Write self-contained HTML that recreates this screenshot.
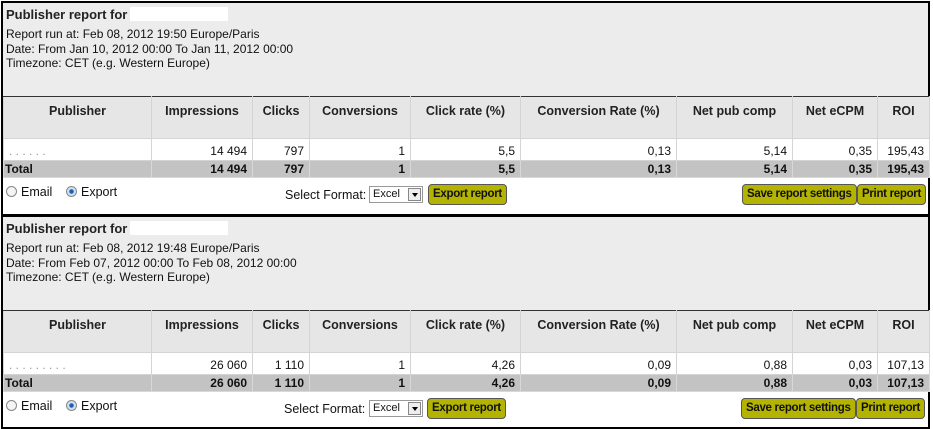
<!DOCTYPE html>
<html><head><meta charset="utf-8"><style>
*{margin:0;padding:0;box-sizing:border-box}
body{width:933px;height:428px;background:#fff;font-family:"Liberation Sans",Arial,sans-serif;font-size:12px;color:#111;position:relative;overflow:hidden}
.sec{position:absolute;left:1px;width:929px;border:2px solid #000;background:#fff}
.hd{position:absolute;left:0;top:0;width:100%;height:93px;background:#ececec;padding:4px 3px}
.hd b{font-size:13px;display:block;margin-bottom:5px;color:#222}
.hd .mask{display:inline-block;width:98px;height:14px;background:#fff;vertical-align:-2px;margin-left:3px}
.hd div{line-height:14.5px}
table{position:absolute;left:0;border-collapse:collapse;width:926px;table-layout:fixed}
td,th{border:1px solid #d4d4d4;padding:0 5px;white-space:nowrap;overflow:hidden}
th{background:#e6e6e6;height:42px;vertical-align:top;padding-top:7px;font-size:12.5px;color:#222;border-top:1px solid #333}
tr.d td{height:22px;text-align:right;background:#fff;padding-top:3px}
tr.t td{height:17px;text-align:right;background:#c3c3c3;font-weight:bold;border-color:#d8d8d8}
.ctl{position:absolute;left:0;width:100%;height:33px}
.rad{position:absolute;top:6px;font-size:12.5px}
.rad i{display:inline-block;width:11px;height:11px;border-radius:50%;border:1px solid #888;background:#f4f4f4;vertical-align:-1px;margin-right:4px}
.rad i.on{background:radial-gradient(circle,#1d5fb0 30%,#cfe0f0 40%)}
.btn{position:absolute;top:5px;height:21px;background:#b3b300;border:1px solid #555;border-radius:4px;font-weight:bold;font-size:11.5px;padding:3px 4px;color:#111;letter-spacing:-0.3px}
.sel{position:absolute;top:7px;left:366px;width:54px;height:17px;border:1px solid #999;font-size:11px;padding:1px 3px;background:#fff}
.sel span{position:absolute;right:1px;top:1px;width:13px;height:13px;border:1px solid #888;background:#eee}
.sel span:after{content:"";position:absolute;left:3px;top:4px;border:3px solid transparent;border-top:4px solid #000}
</style></head><body>

<div class="sec" style="top:1px;height:216px;border-bottom-width:3px">
 <div class="hd"><b>Publisher report for<span class="mask"></span></b>
 <div>Report run at: Feb 08, 2012 19:50 Europe/Paris</div>
 <div>Date: From Jan 10, 2012 00:00 To Jan 11, 2012 00:00</div>
 <div>Timezone: CET (e.g. Western Europe)</div></div>
 <table style="top:93px">
 <colgroup><col style="width:148px"><col style="width:101px"><col style="width:57px"><col style="width:101px"><col style="width:110px"><col style="width:156px"><col style="width:116px"><col style="width:85px"><col style="width:52px"></colgroup>
 <tr><th>Publisher</th><th>Impressions</th><th>Clicks</th><th>Conversions</th><th>Click rate (%)</th><th>Conversion Rate (%)</th><th>Net pub comp</th><th>Net eCPM</th><th>ROI</th></tr>
 <tr class="d"><td style="text-align:left;color:#999">. . . . . .</td><td>14 494</td><td>797</td><td>1</td><td>5,5</td><td>0,13</td><td>5,14</td><td>0,35</td><td>195,43</td></tr>
 <tr class="t"><td style="text-align:left;padding-left:1px">Total</td><td>14 494</td><td>797</td><td>1</td><td>5,5</td><td>0,13</td><td>5,14</td><td>0,35</td><td>195,43</td></tr>
 </table>
 <div class="ctl" style="top:176px">
  <div class="rad" style="left:3px"><i></i>Email</div>
  <div class="rad" style="left:63px"><i class="on"></i>Export</div>
  <div class="rad" style="left:282px;top:9px">Select Format:</div>
  <div class="sel">Excel<span></span></div>
  <div class="btn" style="left:425px">Export report</div>
  <div class="btn" style="left:739px">Save report settings</div>
  <div class="btn" style="left:854px">Print report</div>
 </div>
</div>

<div class="sec" style="top:217px;height:212px;border-top-width:0">
 <div class="hd"><b>Publisher report for<span class="mask"></span></b>
 <div>Report run at: Feb 08, 2012 19:48 Europe/Paris</div>
 <div>Date: From Feb 07, 2012 00:00 To Feb 08, 2012 00:00</div>
 <div>Timezone: CET (e.g. Western Europe)</div></div>
 <table style="top:93px">
 <colgroup><col style="width:148px"><col style="width:101px"><col style="width:57px"><col style="width:101px"><col style="width:110px"><col style="width:156px"><col style="width:116px"><col style="width:85px"><col style="width:52px"></colgroup>
 <tr><th>Publisher</th><th>Impressions</th><th>Clicks</th><th>Conversions</th><th>Click rate (%)</th><th>Conversion Rate (%)</th><th>Net pub comp</th><th>Net eCPM</th><th>ROI</th></tr>
 <tr class="d"><td style="text-align:left;color:#999">. . . . . . . . .</td><td>26 060</td><td>1 110</td><td>1</td><td>4,26</td><td>0,09</td><td>0,88</td><td>0,03</td><td>107,13</td></tr>
 <tr class="t"><td style="text-align:left;padding-left:1px">Total</td><td>26 060</td><td>1 110</td><td>1</td><td>4,26</td><td>0,09</td><td>0,88</td><td>0,03</td><td>107,13</td></tr>
 </table>
 <div class="ctl" style="top:176px">
  <div class="rad" style="left:3px"><i></i>Email</div>
  <div class="rad" style="left:63px"><i class="on"></i>Export</div>
  <div class="rad" style="left:281px;top:9px">Select Format:</div>
  <div class="sel">Excel<span></span></div>
  <div class="btn" style="left:424px">Export report</div>
  <div class="btn" style="left:738px">Save report settings</div>
  <div class="btn" style="left:853px">Print report</div>
 </div>
</div>
</body></html>
